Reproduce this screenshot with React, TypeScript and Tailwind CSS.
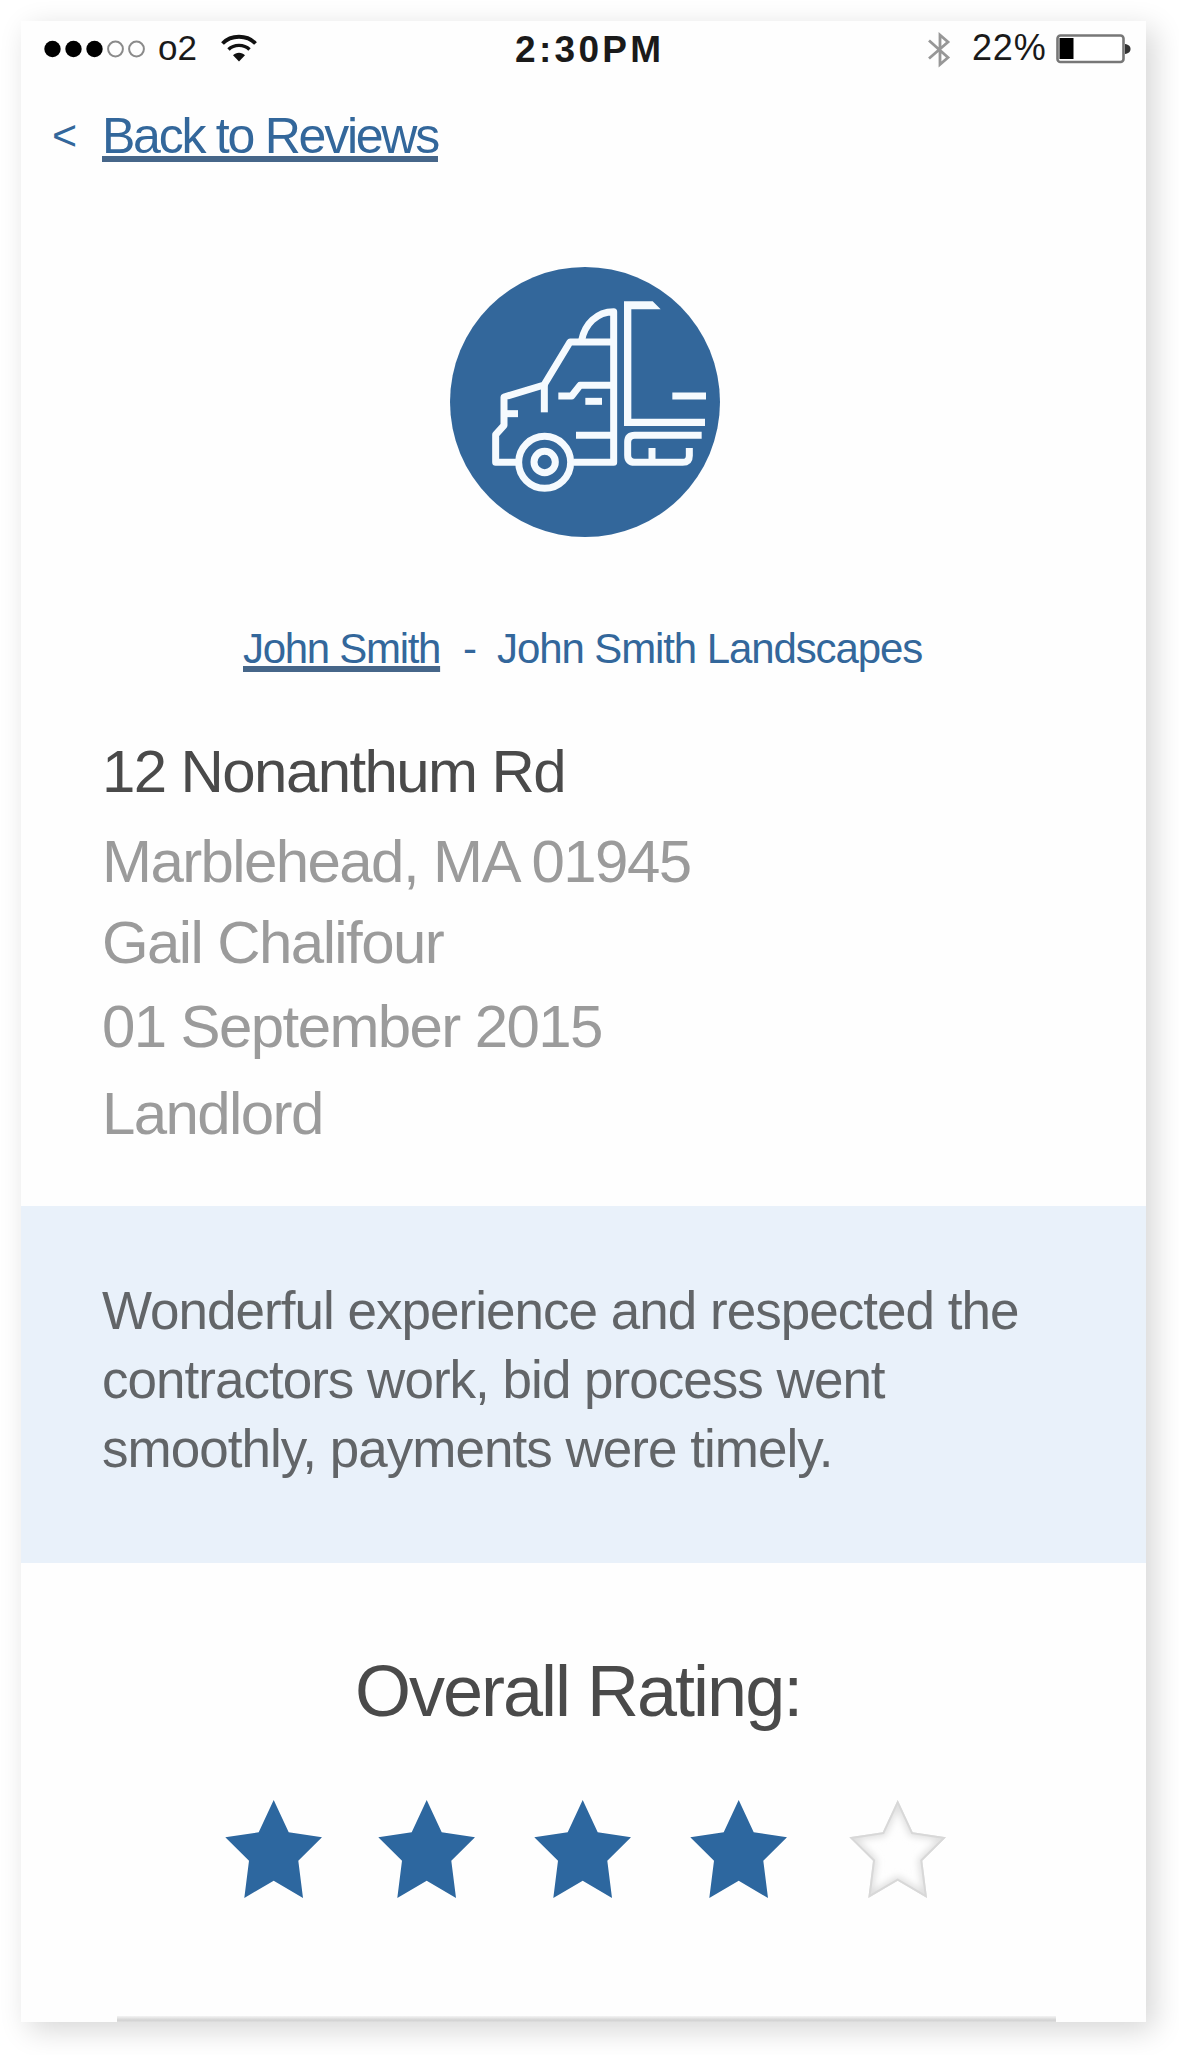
import React from "react";

const STAR = "48.7,0 63.7,32.3 97,37.3 73.3,60.7 78,98 48.7,80.7 19.3,98 24,60.7 0.3,37.3 33.7,32.3";

function SignalDots() {
  return (
    <svg className="mt-[19px] h-[18px] w-[103px]" viewBox="0 0 103 18">
      {[8.5, 29.5, 50.5].map((x) => (
        <circle key={x} cx={x} cy="9" r="8.2" fill="#000" />
      ))}
      {[71.5, 92.5].map((x) => (
        <circle key={x} cx={x} cy="9" r="7.4" fill="none" stroke="#8a8a8a" strokeWidth="2" />
      ))}
    </svg>
  );
}

function Wifi() {
  return (
    <svg className="mt-[13px] ml-[21px] h-[28px] w-[36px]" viewBox="0 0 36 28" fill="none" stroke="#111">
      <path d="M1.5 9.5 C10 0.5 26 0.5 34.5 9.5" strokeWidth="3.8" />
      <path d="M7.5 15.5 C13 10 23 10 28.5 15.5" strokeWidth="3.4" />
      <path d="M12 21.3 C15 17.8 21 17.8 24 21.3 L18 27.5 Z" fill="#111" stroke="none" />
    </svg>
  );
}

function Bluetooth() {
  return (
    <svg className="mt-[10px] h-[37px] w-[26px]" viewBox="0 0 26 37" fill="none" stroke="#979797" strokeWidth="2.8">
      <path d="M3 9.5 L22 26.5 L14 33.5 V4 L22 11 L3 27.5" />
    </svg>
  );
}

function Battery() {
  return (
    <svg className="mt-[12px] ml-[9px] h-[32px] w-[76px]" viewBox="0 0 76 32">
      <rect x="2.5" y="2.5" width="66" height="26.5" rx="3" fill="#fff" stroke="#777" strokeWidth="2.6" />
      <rect x="4.5" y="5" width="14" height="21" fill="#000" />
      <path d="M70 11 C74 11.5 75.5 13.500 75.5 16 C75.5 18.5 74 20.5 70 21 Z" fill="#333" />
    </svg>
  );
}

function TruckBadge() {
  return (
    <svg className="mt-[101px] ml-[429px] h-[270px] w-[270px] shrink-0" viewBox="60 50 810 810">
      <circle cx="465" cy="455" r="405" fill="#33679b" />
      <path d="M582 153H668L692 177H604V505H825V527H582Z" fill="#f5fafe" />
      <g fill="none" stroke="#f5fafe" strokeWidth="21" strokeLinejoin="round">
        <path d="M455 270 C464 222 500 184 551 184 V636 H430" />
        <path d="M551 275 H420 L342 404 L222 440 V525 L197 553 V636 H265" />
        <path d="M343 402 V486" />
        <path d="M222 490 H264" />
        <path d="M385 437 H425 L450 405 H545" />
        <path d="M466 453 H516" />
        <path d="M438 555 H545" />
        <circle cx="344" cy="636" r="78" />
        <circle cx="344" cy="635" r="32" />
        <path d="M727 437 H828" />
        <path d="M815 555 H614 Q593 555 593 576 V614 Q593 636 614 636 H758 Q778 636 778 616 V593" />
        <path d="M666 636 V593" />
      </g>
    </svg>
  );
}

function Star({ filled, className }: { filled: boolean; className: string }) {
  return (
    <svg className={`h-[98px] w-[97px] shrink-0 ${className}`} viewBox="0 0 97 98">
      {filled ? (
        <polygon points={STAR} fill="#2d679f" />
      ) : (
        <>
          <defs>
            <clipPath id="star-clip">
              <polygon points={STAR} />
            </clipPath>
            <filter id="star-soft" x="-20%" y="-20%" width="140%" height="140%">
              <feGaussianBlur stdDeviation="3.5" />
            </filter>
          </defs>
          <g clipPath="url(#star-clip)">
            <polygon points={STAR} fill="#fefefe" />
            <polygon points={STAR} fill="none" stroke="#dedede" strokeWidth="8" filter="url(#star-soft)" />
            <polygon points={STAR} fill="none" stroke="#d8d8d8" strokeWidth="4" />
          </g>
        </>
      )}
    </svg>
  );
}

export default function App() {
  return (
    <div className="h-[2055px] w-[1179px] overflow-hidden bg-white pt-[21px] pl-[21px] font-['Liberation_Sans',Arial,sans-serif]">
      <main className="flex h-[2001px] w-[1125px] flex-col bg-[#fefefe] whitespace-nowrap shadow-[8px_8px_28px_rgba(0,0,0,0.165)]">
        <header className="flex h-[56px] shrink-0 items-start pr-[15px] pl-[23px] text-[#1a1a1a]">
          <SignalDots />
          <span className="ml-[11px] w-[42px] text-[35px] leading-[54px]">o2</span>
          <Wifi />
          <span className="ml-[258px] text-[37px] leading-[57px] font-bold tracking-[3.3px]">2:30PM</span>
          <div className="ml-auto flex items-start">
            <Bluetooth />
            <span className="ml-[20px] w-[74px] text-[36px] leading-[54px] tracking-[0.8px]">22%</span>
            <Battery />
          </div>
        </header>

        <nav className="mt-[29px] flex h-[60px] shrink-0 items-start text-[#33679b]">
          <span className="ml-[31px] w-[50px] text-[43px] leading-[59px]">&lt;</span>
          <a className="text-[50px] leading-[60px] tracking-[-2.24px] underline decoration-[#466689] decoration-[6px] underline-offset-[3px] [text-decoration-skip-ink:none]">
            Back to Reviews
          </a>
        </nav>

        <TruckBadge />

        <div className="mt-[87px] flex h-[50px] shrink-0 items-start text-[42px] leading-[50px] tracking-[-1.1px] text-[#33679b]">
          <a className="ml-[222px] w-[220px] tracking-[-1.3px] underline decoration-[#466689] decoration-[6px] underline-offset-[3px] [text-decoration-skip-ink:none]">
            John Smith
          </a>
          <span className="w-[34px]">-</span>
          <span>John Smith Landscapes</span>
        </div>

        <section className="mt-[68px] flex shrink-0 flex-col pl-[81px] text-[60px] leading-[60px] tracking-[-1.6px] text-[#9b9b9b]">
          <h1 className="text-[#4a4a4a]">12 Nonanthum Rd</h1>
          <p className="mt-[30px]">Marblehead, MA 01945</p>
          <p className="mt-[21px]">Gail Chalifour</p>
          <p className="mt-[24px]">01 September 2015</p>
          <p className="mt-[27px]">Landlord</p>
        </section>

        <section className="mt-[62px] h-[357px] shrink-0 bg-[#e9f1fa] pt-[70px] pl-[81px]">
          <p className="text-[53px] leading-[69px] tracking-[-0.98px] text-[#626568]">
            Wonderful experience and respected the
            <br />
            contractors work, bid process went
            <br />
            smoothly, payments were timely.
          </p>
        </section>

        <h2 className="mt-[88px] ml-[334px] shrink-0 text-[72px] leading-[81px] tracking-[-2px] text-[#4a4a4a]">
          Overall Rating:
        </h2>

        <div className="mt-[68px] flex h-[98px] shrink-0 items-start">
          <Star filled className="ml-[203.5px]" />
          <Star filled className="ml-[56px]" />
          <Star filled className="ml-[59px]" />
          <Star filled className="ml-[59px]" />
          <Star filled={false} className="ml-[62px]" />
        </div>

        <div className="mt-auto ml-[96px] h-[6px] w-[939px] shrink-0 bg-linear-to-b from-[#f4f4f4] via-[#d2d2d2] via-70% to-[#dedede]" />
      </main>
    </div>
  );
}
